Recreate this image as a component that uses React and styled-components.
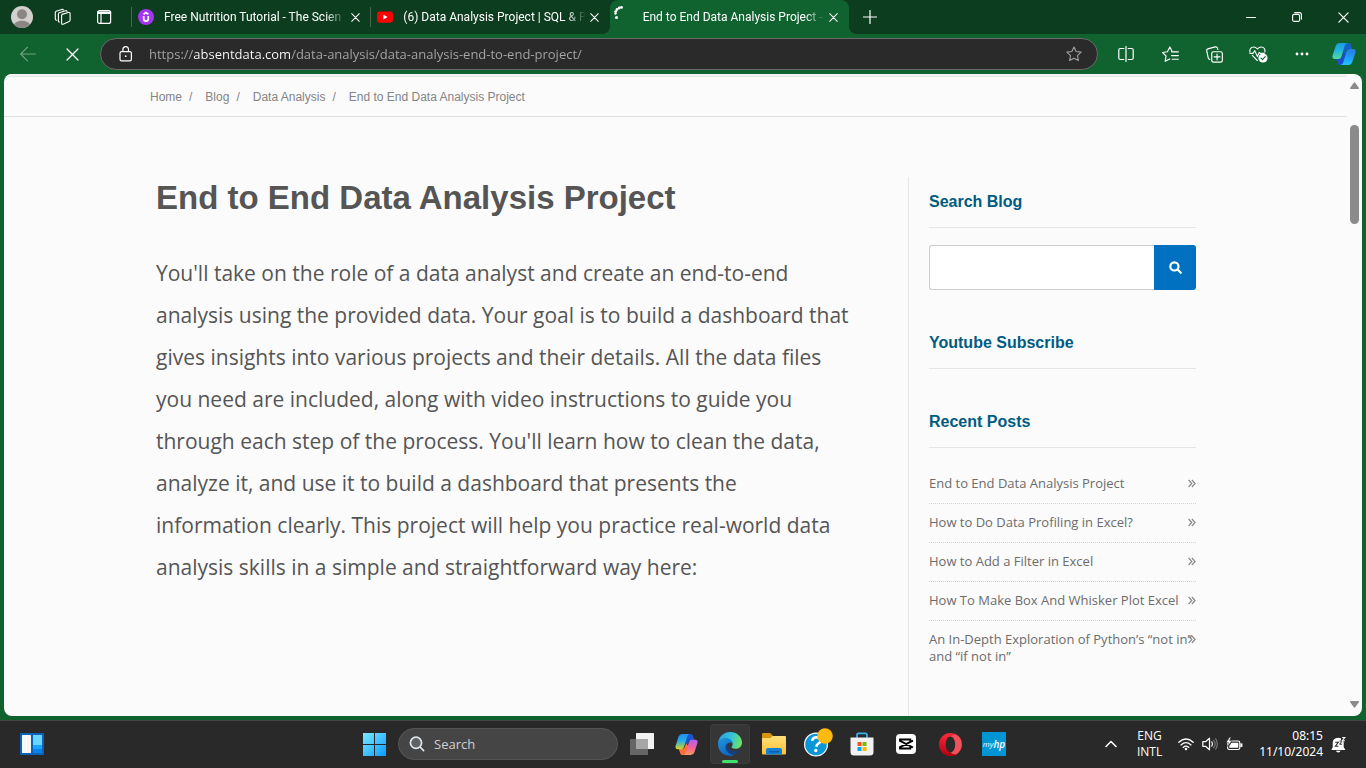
import React from 'react';
import styled, { createGlobalStyle, css } from 'styled-components';

const GlobalStyle = createGlobalStyle`
  *, *::before, *::after { box-sizing: border-box; }
  html, body, #root { height: 100%; }
  body { margin: 0; background: #10622f; }
  h1, h2, p, ol, ul { margin: 0; padding: 0; }
  ol, ul { list-style: none; }
  svg { display: block; flex: none; }
  button, input { font: inherit; }
  button { padding: 0; border: 0; background: none; color: inherit; }
  a { color: inherit; text-decoration: none; }
`;

const uiFont = `"Open Sans", "Noto Sans", sans-serif`;
const headingFont = `"Liberation Sans", Arial, sans-serif`;

const Screen = styled.div`
  display: flex;
  flex-direction: column;
  height: 100vh;
  overflow: hidden;
  font-family: ${uiFont};
`;

/* ---------- title bar ---------- */

const TitleBar = styled.header`
  display: flex;
  flex: none;
  height: 34px;
  background: #0c3d1f;
  color: #fff;
`;

const ProfileArea = styled.div`
  display: flex;
  align-items: center;
  flex: none;
  gap: 19px;
  width: 131px;
  padding-left: 11px;
`;

const BarButton = styled.button`
  display: flex;
  align-items: center;
  justify-content: center;
  flex: none;
  width: ${(p) => p.$width || 22}px;
  height: ${(p) => p.$height || 22}px;
  color: ${(p) => p.$color || '#fff'};
`;

const TabStrip = styled.div`
  display: flex;
  flex: 0 1 718px;
  min-width: 0;
`;

const TabItem = styled.div`
  position: relative;
  display: flex;
  align-items: center;
  flex: 1 1 239px;
  min-width: 0;
  padding: 0 6px 0 7px;
  ${(p) =>
    p.$active
      ? css`
          padding-left: 4px;
          background: #10622f;
          border-radius: 8px 8px 0 0;
          &::before,
          &::after {
            content: '';
            position: absolute;
            bottom: 0;
            width: 8px;
            height: 8px;
          }
          &::before {
            left: -8px;
            background: radial-gradient(circle at 0 0, transparent 8px, #10622f 8px);
          }
          &::after {
            right: -8px;
            background: radial-gradient(circle at 100% 0, transparent 8px, #10622f 8px);
          }
        `
      : css`
          &::after {
            content: '';
            position: absolute;
            left: 0;
            top: 7px;
            width: 1px;
            height: 20px;
            background: #47694f;
          }
        `}
`;

const TabTitle = styled.a`
  flex: 1;
  min-width: 0;
  margin-left: ${(p) => (p.$active ? 20 : 10)}px;
  overflow: hidden;
  white-space: nowrap;
  font-size: 12px;
  line-height: 20px;
  font-family: Roboto, ${uiFont};
  mask-image: linear-gradient(to right, #000 calc(100% - 20px), transparent 100%);
`;

const WindowButtons = styled.div`
  display: flex;
  margin-left: auto;
`;

/* ---------- navigation bar ---------- */

const NavBar = styled.nav`
  display: flex;
  align-items: center;
  flex: none;
  height: 40px;
  padding: 0 2px 0 6px;
  background: #10622f;
  color: #fff;
`;

const AddressBar = styled.label`
  display: flex;
  align-items: center;
  flex: 1;
  min-width: 0;
  height: 32px;
  margin: 0 6px;
  padding: 0 14px 0 16px;
  gap: 16px;
  border: 1px solid #6a6a6a;
  border-radius: 16px;
  background: #2a2a2a;
`;

const UrlInput = styled.input`
  flex: 1;
  min-width: 0;
  height: 28px;
  padding: 0;
  border: 0;
  outline: 0;
  font-size: 13px;
  color: transparent;
  background: linear-gradient(to right, #a8a8a8 44px, #fff 44px, #fff 142px, #a8a8a8 142px);
  background-clip: text;
`;

/* ---------- web page ---------- */

const Viewport = styled.div`
  display: flex;
  flex: 1;
  min-height: 0;
  margin: 0 4px 4px;
  border-radius: 8px;
  background: #fbfbfb;
  overflow: hidden;
`;

const Page = styled.div`
  display: flex;
  flex-direction: column;
  flex: 1;
  min-width: 0;
  border-top: 2px solid #f3f3f3;
  overflow: hidden;
`;

const CrumbBar = styled.nav`
  flex: none;
  border-top: 1px solid #e6e6e6;
  border-bottom: 1px solid #e0e0e0;
`;

const Container = styled.div`
  width: 100%;
  max-width: 1051px;
  margin: 0 auto;
`;

const Crumbs = styled.ol`
  display: flex;
  padding-top: 2px;
  font: 12px/37px ${headingFont};
  color: #848484;
`;

const Crumb = styled.li`
  & + &::before {
    content: '/';
    padding: 0 13px 0 7px;
  }
`;

const Columns = styled(Container)`
  display: flex;
  flex: 1;
  padding: 60px 5px 0 6px;
`;

const Article = styled.main`
  flex: 1;
  min-width: 0;
  padding-right: 52px;
`;

const ArticleTitle = styled.h1`
  font: bold 33px/42px ${headingFont};
  color: #555;
`;

const ArticleText = styled.p`
  margin-top: 33px;
  font-size: 21px;
  line-height: 42px;
  color: #555;
`;

const Sidebar = styled.aside`
  flex: none;
  width: 288px;
  padding: 14px 0 0 20px;
  border-left: 1px solid #e6e6e6;
`;

const Widget = styled.section`
  margin-bottom: 42px;
`;

const WidgetTitle = styled.h2`
  padding-bottom: 14px;
  border-bottom: 1px solid #e6e6e6;
  font: bold 16px/22px ${headingFont};
  color: #005c81;
`;

const SearchForm = styled.form`
  display: flex;
  height: 45px;
  margin-top: 17px;
`;

const SearchInput = styled.input`
  flex: 1;
  min-width: 0;
  padding: 0 12px;
  border: 1px solid #ccc;
  border-right: 0;
  border-radius: 3px 0 0 3px;
  background: #fff;
  outline: 0;
`;

const SearchButton = styled.button`
  display: flex;
  align-items: center;
  justify-content: center;
  width: 42px;
  border-radius: 0 3px 3px 0;
  background: #0070c0;
  color: #fff;
`;

const PostList = styled.ul`
  margin-top: 17px;
`;

const PostItem = styled.li`
  position: relative;
  padding: 10px 0 11px;
  font-size: 13px;
  line-height: 17px;
  color: #6c6c6c;
  & + & {
    border-top: 1px dotted #d4d4d4;
  }
`;

const PostArrow = styled.span`
  position: absolute;
  top: 14px;
  right: 0;
  color: #8a8a8a;
`;

const Scrollbar = styled.div`
  display: flex;
  flex-direction: column;
  align-items: center;
  flex: none;
  width: 15px;
  padding: 8px 0;
  color: #8b8b8b;
`;

const ScrollTrack = styled.div`
  flex: 1;
  padding-top: 36px;
`;

const ScrollThumb = styled.div`
  width: 9px;
  height: 99px;
  border-radius: 5px;
  background: #8b8b8b;
`;

/* ---------- taskbar ---------- */

const Taskbar = styled.footer`
  display: grid;
  grid-template-columns: 1fr auto 1fr;
  align-items: center;
  flex: none;
  height: 48px;
  box-shadow: inset 0 1px #444;
  background: #292929;
  color: #fff;
`;

const TaskLeft = styled.div`
  display: flex;
  padding-left: 12px;
`;

const TaskCenter = styled.div`
  display: flex;
  align-items: center;
  gap: 2px;
  padding-left: 2px;
`;

const TaskApps = styled.div`
  display: flex;
  gap: 4px;
  padding: 0 2px;
`;

const TaskButton = styled.button`
  position: relative;
  display: flex;
  align-items: center;
  justify-content: center;
  width: 40px;
  height: 40px;
  border-radius: 4px;
  ${(p) =>
    p.$active &&
    css`
      background: #363636;
      box-shadow: inset 0 0 0 1px #3d3d3d;
      &::after {
        content: '';
        position: absolute;
        left: 12px;
        bottom: 1px;
        width: 16px;
        height: 3px;
        border-radius: 2px;
        background: #3fdf6c;
      }
    `}
`;

const TaskSearch = styled.label`
  display: flex;
  align-items: center;
  gap: 9px;
  width: 220px;
  height: 32px;
  padding: 0 10px;
  border: 1px solid #555;
  border-radius: 16px;
  background: #454545;
`;

const TaskSearchInput = styled.input`
  flex: 1;
  min-width: 0;
  padding: 0;
  border: 0;
  outline: 0;
  background: none;
  font-size: 13px;
  color: #fff;
  &::placeholder {
    color: #d0d0d0;
    opacity: 1;
  }
`;

const Tray = styled.div`
  display: flex;
  align-items: center;
  justify-content: flex-end;
  padding-right: 11px;
`;

const TrayText = styled.button`
  display: block;
  font-size: 12px;
  line-height: 16px;
  font-family: ${(p) => (p.$align ? `"Noto Sans", ${uiFont}` : uiFont)};
  text-align: ${(p) => p.$align || 'center'};
`;

const TrayIcons = styled.button`
  display: flex;
  align-items: center;
  gap: 8px;
  margin: 0 16px;
`;

/* ---------- icons ---------- */

const Line = ({ size = 16, width = 1, box = 16, children }) => (
  <svg
    width={size}
    height={size}
    viewBox={`0 0 ${box} ${box}`}
    fill="none"
    stroke="currentColor"
    strokeWidth={width}
    strokeLinecap="round"
    strokeLinejoin="round"
    aria-hidden="true"
  >
    {children}
  </svg>
);

const CloseIcon = ({ size = 9, width = 1.2 }) => (
  <Line size={size} box={10} width={width}>
    <path d="M.8.8l8.4 8.4M9.2.8L.8 9.2" />
  </Line>
);

const AvatarIcon = () => (
  <svg width="22" height="22" viewBox="0 0 22 22" aria-hidden="true">
    <clipPath id="avatar"><circle cx="11" cy="11" r="11" /></clipPath>
    <g clipPath="url(#avatar)">
      <rect width="22" height="22" fill="#d2d0ce" />
      <circle cx="11" cy="8.3" r="5" fill="#8a8683" />
      <path d="M2.500 21c0-4 3.600-6.200 8.500-6.200s8.500 2.200 8.500 6.200v2h-17z" fill="#8a8683" />
    </g>
  </svg>
);

const WorkspacesIcon = () => (
  <Line size={18} box={18} width={1.1}>
    <path d="M8 6.400l6.300-1.900q1.800-.4 1.800 1.200v6.300q0 1.200-1 1.500l-6 2.700q-1.500.5-1.500-1V7.600q0-1 .4-1.200z" />
    <path d="M5.600 14q-1.200.1-1.200-1V6q0-1 .9-1.300l6.200-2q1.300-.3 1.500.7" />
    <path d="M2.800 12.200q-1.500 0-1.500-1.200V4.500q0-1 .9-1.300L7.900 1.400q1.200-.3 1.500.6" />
  </Line>
);

const TabMenuIcon = () => (
  <Line width={1.2}>
    <rect x="1.600" y="1.600" width="13" height="12.800" rx="2" />
    <path d="M1.600 3.200h13M1.600 4.400h13M5 4.600v9.600" />
  </Line>
);

const UdemyIcon = () => (
  <svg width="16" height="16" viewBox="0 0 16 16" aria-hidden="true">
    <circle cx="8" cy="8" r="8" fill="#a435f0" />
    <path d="M5.700 7v3.100q0 2 2.300 2t2.300-2V7M5.600 5.200L8 3.600l2.400 1.600" fill="none" stroke="#fff" strokeWidth="1.700" />
  </svg>
);

const YoutubeIcon = () => (
  <svg width="16" height="16" viewBox="0 0 16 16" aria-hidden="true">
    <rect y="2.400" width="16" height="11.400" rx="3" fill="#f00" />
    <path d="M6.400 5.700v4.800l4.200-2.400z" fill="#fff" />
  </svg>
);

const SpinnerIcon = () => (
  <svg width="9" height="34" viewBox="0 0 9 34" fill="#fff" aria-hidden="true">
    <circle cx="7.500" cy="7.400" r="1.400" />
    <circle cx="5.200" cy="8" r="1.400" />
    <circle cx="3" cy="9.500" r="1.400" />
    <circle cx="1.700" cy="11.600" r="1.400" />
    <circle cx="1.500" cy="13.500" r="1.200" />
    <circle cx="2.500" cy="17.500" r="1.500" />
  </svg>
);

const RestoreIcon = () => (
  <Line size={10} box={10} width={1.1}>
    <rect x=".6" y="2.400" width="7" height="7" rx="1.500" />
    <path d="M2.700.6h4.700q2 0 2 2v4.700" />
  </Line>
);

const BackIcon = () => (
  <Line width={1.1}>
    <path d="M15.400 8H.8M7.500 1.200L.7 8l6.800 6.800" />
  </Line>
);

const LockIcon = () => (
  <Line width={1.2}>
    <rect x="3" y="5.600" width="11.400" height="9.300" rx="1.600" />
    <path d="M5.900 5.500V3.600a2.800 2.900 0 0 1 5.600 0v1.900" />
    <circle cx="8.700" cy="10.200" r=".9" fill="currentColor" stroke="none" />
  </Line>
);

const StarIcon = () => (
  <Line width={1.1}>
    <path d="M8 .9l2.150 4.600 5 .65-3.700 3.450.95 5L8 12.150 3.600 14.600l.95-5L.85 6.150l5-.65z" />
  </Line>
);

const SplitIcon = () => (
  <Line width={1.2}>
    <path d="M5.800 2.500H2.300q-1.500 0-1.500 1.500v8q0 1.500 1.500 1.500h3.500M10.200 2.500h3.500q1.500 0 1.500 1.500v8q0 1.500-1.500 1.500h-3.500M8 .5v15" />
  </Line>
);

const FavoritesIcon = () => (
  <Line width={1.1} size={17}>
    <path d="M9.400 4.900L7.400.9l-2.300 4.500-4.600.7 3.300 3.300-.8 5 4.300-2.200" />
    <path d="M9 5.500h6.400M9 9h6.400M9.600 12.500h5.800" />
  </Line>
);

const CollectionsIcon = () => (
  <Line width={1.1} size={17}>
    <rect x="5.400" y="5.400" width="10" height="9.800" rx="1.800" />
    <path d="M10.400 7.600v5.400M7.700 10.300h5.400" />
    <path d="M3.600 12.600q-1.200-.1-1.500-1.400L.7 4.600q-.3-1.500 1.100-1.900L8.700.8q1.500-.3 2 1l.4 1.500" />
  </Line>
);

const HealthIcon = () => (
  <svg width="19" height="17" viewBox="0 0 19 17" fill="none" stroke="currentColor" strokeWidth="1.100" strokeLinecap="round" strokeLinejoin="round" aria-hidden="true">
    <path d="M1 6.300C.3 3.300 2 1 4.600 1q2.200 0 3.800 2Q10 1 12.200 1c2.800 0 4.300 2.400 3.600 5M3.300 9.400l5 5.100" />
    <path d="M1 7.400h3l1.800-2.800 2.500 5.800 1.900-4 1 1h4" />
    <circle cx="14" cy="12" r="4.600" fill="#fff" stroke="none" />
    <path d="M12 12.100l1.500 1.500 2.700-2.900" stroke="#10622f" />
  </svg>
);

const MoreIcon = () => (
  <svg width="14" height="4" viewBox="0 0 14 4" fill="currentColor" aria-hidden="true">
    <circle cx="2" cy="2" r="1.400" /><circle cx="7" cy="2" r="1.400" /><circle cx="12" cy="2" r="1.400" />
  </svg>
);

const CopilotIcon = ({ size, id, colors }) => (
  <svg width={size} height={size} viewBox="0 0 24 24" aria-hidden="true">
    <defs>
      <linearGradient id={`${id}a`} x1="0" y1="0" x2="0" y2="1">
        <stop offset="0" stopColor={colors[0]} />
        <stop offset=".45" stopColor={colors[1]} />
        <stop offset="1" stopColor={colors[2]} />
      </linearGradient>
      <linearGradient id={`${id}b`} x1=".5" y1="0" x2=".4" y2="1">
        <stop offset="0" stopColor={colors[3]} />
        <stop offset=".5" stopColor={colors[4]} />
        <stop offset="1" stopColor={colors[5]} />
      </linearGradient>
    </defs>
    <path d="M11.500 1h4.800q2 0 2.600 2l1.200 4.300h-3.600q-1.800 0-2.500 2l-1.500 4L9.500 8z" fill={colors[6]} />
    <path d="M12.500 23H8q-2 0-2.600-2l-1.400-4.300h3.500q2 0 2.700-2l1.300-4 3.500 4.500z" fill={colors[7]} />
    <path d="M7.500 1h7.800q-2 .6-2.700 3L9.500 14.500q-.8 2.500-3.200 2.500H2.800Q-.3 17 .6 13.500L3.700 4Q4.700 1 7.500 1z" fill={`url(#${id}a)`} />
    <path d="M16.500 23H8.700q2-.6 2.700-3l3.100-10.500Q15.300 7 17.700 7h3.500q3.100 0 2.200 3.500L20.300 20q-1 3-3.800 3z" fill={`url(#${id}b)`} />
  </svg>
);

const MagnifierIcon = () => (
  <Line size={13} box={12} width={2}>
    <circle cx="5" cy="5" r="3.800" />
    <path d="M8.100 8.100l2.800 2.800" />
  </Line>
);

const DoubleAngle = () => (
  <svg width="8" height="9" viewBox="0 0 8 9" fill="none" stroke="currentColor" strokeWidth="1.200" aria-hidden="true">
    <path d="M.6 1l3.200 3.500L.6 8M3.900 1l3.200 3.500L3.900 8" />
  </svg>
);

const ScrollArrow = ({ down }) => (
  <svg width="9" height="7" viewBox="0 0 9 7" fill="currentColor" aria-hidden="true">
    <path d={down ? 'M.6 0h7.800q.9.300.4 1.200L5.200 6.300q-.7.800-1.400 0L.2 1.200Q-.3.300.6 0z' : 'M.6 7h7.800q.9-.3.400-1.200L5.200.7q-.7-.8-1.400 0L.2 5.800Q-.3 6.700.6 7z'} />
  </svg>
);

const WidgetsIcon = () => (
  <svg width="24" height="22" viewBox="0 0 24 22" aria-hidden="true">
    <rect width="24" height="22" rx="1" fill="#0c62b8" />
    <rect x="2" y="2" width="9" height="18" rx=".6" fill="#f7f7f7" />
    <rect x="13" y="2" width="9" height="10" fill="#68d6ff" />
    <rect x="13" y="12" width="9" height="4" fill="#1ba4fb" />
    <rect x="13" y="16" width="9" height="4" fill="#0883e8" />
  </svg>
);

const StartIcon = () => (
  <svg width="23" height="23" viewBox="0 0 23 23" aria-hidden="true">
    <linearGradient id="start" gradientUnits="userSpaceOnUse" x1="0" y1="0" x2="23" y2="23">
      <stop offset="0" stopColor="#7beaff" /><stop offset="1" stopColor="#0a9bff" />
    </linearGradient>
    <path d="M0 0h11v11H0zM12 0h11v11H12zM0 12h11v11H0zM12 12h11v11H12z" fill="url(#start)" />
  </svg>
);

const TaskSearchIcon = () => (
  <svg width="16" height="16" viewBox="0 0 16 16" fill="#5e6264" stroke="#dfe6ea" strokeWidth="1.700" strokeLinecap="round" aria-hidden="true">
    <circle cx="7" cy="6.800" r="5.600" /><path d="M11.100 11l3.500 3.600" />
  </svg>
);

const TaskViewIcon = () => (
  <svg width="24" height="22" viewBox="0 0 24 22" aria-hidden="true">
    <rect x="6" width="18" height="16" rx=".6" fill="#f2f2f2" />
    <rect y="6" width="18" height="16" rx=".6" fill="#666" />
    <rect x="6" y="6" width="12" height="10" fill="#a6a6a6" />
  </svg>
);

const EdgeIcon = () => (
  <svg width="24" height="24" viewBox="0 0 24 24" aria-hidden="true">
    <defs>
      <linearGradient id="edgeTop" x1="0" y1=".4" x2="1" y2=".6">
        <stop offset="0" stopColor="#2a9fe0" /><stop offset=".5" stopColor="#33c4dc" /><stop offset="1" stopColor="#72e35c" />
      </linearGradient>
      <linearGradient id="edgeSide" x1="0" y1="0" x2=".5" y2="1">
        <stop offset="0" stopColor="#1e97de" /><stop offset="1" stopColor="#1166c0" />
      </linearGradient>
    </defs>
    <path d="M.1 11C.8 4.400 6 0 12 0c7 0 12 5 12 10.500 0 4-3 6.300-6.400 6.300-3.300 0-4.400-1.300-4.100-2 .9-1 1.400-2 .9-3.900C13.600 7.800 10 6.300 6.600 7 3.500 7.600 1 9.300.1 11z" fill="url(#edgeTop)" />
    <path d="M.1 11C1 7.800 4.200 6 7.600 6c4 0 6.600 2.400 6.900 5.200-1.700-1.600-5.700-1-6 3.300-.2 4.200 3.300 8 7.500 8.400C8.600 26-.8 20.600.1 11z" fill="url(#edgeSide)" />
    <path d="M9.900 11c-2.800 1.400-3 5.300-.8 8.300 2.800 3.700 8.300 4.700 12.600-.2.400-.5.100-.8-.5-.5-5.500 2.500-11.600-.7-12-4.600-.1-1.200.1-2.200.7-3z" fill="#123f88" />
  </svg>
);

const FolderIcon = () => (
  <svg width="24" height="22" viewBox="0 0 24 22" aria-hidden="true">
    <path d="M0 1.200Q0 0 1.200 0h6.300q.8 0 1.400.6L11 3v5H0z" fill="#d8950b" />
    <linearGradient id="folder" x1="0" y1="0" x2="0" y2="1"><stop offset="0" stopColor="#ffe07c" /><stop offset="1" stopColor="#fdc130" /></linearGradient>
    <path d="M0 6q0-1 1-1h7.500l2.200-2H23q1 0 1 1v16.500q0 1-1 1H1q-1 0-1-1z" fill="url(#folder)" />
    <path d="M4 21.500V17q0-2 2-2h12q2 0 2 2v4.500z" fill="#1481d8" /><path d="M7 18h10v1.500H7z" fill="#0d5ba5" />
  </svg>
);

const HelpIcon = () => (
  <svg width="30" height="32" viewBox="0 0 30 32" aria-hidden="true">
    <circle cx="13" cy="16.500" r="12" fill="#fff" />
    <circle cx="13" cy="16.500" r="10.800" fill="#0b96d6" />
    <path d="M9.200 13q.3-3.800 4.500-3.800 4 .2 3.800 3.600-.1 1.700-2.200 2.900-1.700 1-2 3" fill="none" stroke="#fff" strokeWidth="2.600" />
    <circle cx="12.800" cy="22.500" r="1.700" fill="#fff" />
    <circle cx="22" cy="8" r="7.800" fill="#ffb90f" />
  </svg>
);

const StoreIcon = () => (
  <svg width="24" height="24" viewBox="0 0 24 24" aria-hidden="true">
    <path d="M7 6V3q0-1.700 1.700-1.700h6.600Q17 1.300 17 3v3" fill="none" stroke="#37b4ee" strokeWidth="1.700" />
    <path d="M.5 5.500h23V20q0 3.500-3.500 3.500H4Q.5 23.500.5 20z" fill="#f1f1f1" />
    <path d="M7.500 10h4v4h-4z" fill="#f25022" /><path d="M12.500 10h4v4h-4z" fill="#7fba00" />
    <path d="M7.500 15h4v4h-4z" fill="#00a4ef" /><path d="M12.500 15h4v4h-4z" fill="#ffb900" />
  </svg>
);

const CapcutIcon = () => (
  <svg width="20" height="20" viewBox="0 0 20 20" aria-hidden="true">
    <rect width="20" height="20" rx="4" fill="#fff" />
    <path d="M17 6.700L4 13.200v1.300h10.300v-1.700M17 13.500L4 6.800V5.500h10.300v1.700" fill="none" stroke="#000" strokeWidth="1.900" />
  </svg>
);

const OperaIcon = () => (
  <svg width="23" height="23" viewBox="0 0 23 23" aria-hidden="true">
    <linearGradient id="opera" x1="0" y1="0" x2="0" y2="1"><stop offset="0" stopColor="#ff2a3c" /><stop offset="1" stopColor="#b0000f" /></linearGradient>
    <path fillRule="evenodd" d="M11.500 0a11.500 11.500 0 1 0 0 23 11.500 11.500 0 0 0 0-23zm0 3.600c2.700 0 4.700 3.500 4.700 7.900s-2 7.900-4.700 7.900-4.700-3.500-4.700-7.900 2-7.900 4.700-7.900z" fill="url(#opera)" />
    <path d="M11.500 3.600q2.300-2.200 5.400-2.100a11.500 11.500 0 0 1 0 20q-3.100.1-5.400-2.100c2.700 0 4.700-3.500 4.700-7.900s-2-7.900-4.700-7.900z" fill="#f0525a" />
  </svg>
);

const HpTile = styled.span`
  display: flex;
  align-items: center;
  justify-content: center;
  width: 24px;
  height: 24px;
  background: #0096d6;
  color: #fff;
  font: italic 8px/24px ${uiFont};
  b { font-size: 10px; font-weight: 600; }
`;

const ChevronUpIcon = () => (
  <Line size={12} box={12} width={1.5}><path d="M1 8.500l5-5 5 5" /></Line>
);

const WifiIcon = () => (
  <Line width={1.3}>
    <path d="M.8 6.300q7.200-6.500 14.400 0M3 8.900q5-4.500 10 0M5.200 11.400q2.800-2.400 5.600 0" />
    <circle cx="8" cy="13" r="1.300" fill="currentColor" stroke="none" />
  </Line>
);

const SpeakerIcon = () => (
  <Line width={1.2}>
    <path d="M.8 5.700h2.700l4-3.500v11.600l-4-3.500H.8zM9.800 5.800q1.400 2.200 0 4.400" />
    <path d="M11.800 4.300q2.600 3.700 0 7.400M13.700 2.700q3.200 5.300 0 10.600" stroke="#777" />
  </Line>
);

const BatteryIcon = () => (
  <svg width="17" height="14" viewBox="0 0 17 14" fill="none" stroke="currentColor" strokeWidth="1.200" aria-hidden="true">
    <rect x="1.600" y="4" width="12.200" height="8.500" rx="1.800" />
    <path d="M5.500 5.700h6.800v5.100H3.300V9z" fill="currentColor" stroke="none" />
    <path d="M14.400 6.400h2v3.600h-2z" fill="currentColor" stroke="none" />
    <path d="M3.700 0L0 5.600h2.300L1.500 9.500l4.600-5.800H3.600L5 0z" fill="currentColor" stroke="#292929" strokeWidth=".6" />
  </svg>
);

const BellIcon = () => (
  <svg width="16" height="17" viewBox="0 0 16 17" aria-hidden="true">
    <path d="M1.700 11.500V7q0-5 5.500-5.200 5.500.2 5.500 5.200v4.500l1.500 1.800v.7H.5v-.7zM5 14.700h4.500q-.4 1.700-2.250 1.700T5 14.700z" fill="#fff" />
    <path d="M4.300 6.200h3L4.400 10.200h3" fill="none" stroke="#292929" strokeWidth="1.100" />
    <path d="M10 .5h5v4.600h-5z" fill="#292929" />
    <path d="M8.600 5h2.400L8.700 8.200h2.400" fill="none" stroke="#292929" strokeWidth="1" />
    <path d="M11.200 1.500h2.600l-2.600 3.200h2.700" fill="none" stroke="#fff" strokeWidth="1.100" />
  </svg>
);

/* ---------- data ---------- */

const tabs = [
  { title: 'Free Nutrition Tutorial - The Scien', icon: <UdemyIcon /> },
  { title: '(6) Data Analysis Project | SQL & P', icon: <YoutubeIcon /> },
  { title: 'End to End Data Analysis Project -', icon: <SpinnerIcon />, active: true },
];

const crumbs = ['Home', 'Blog', 'Data Analysis', 'End to End Data Analysis Project'];

const posts = [
  'End to End Data Analysis Project',
  'How to Do Data Profiling in Excel?',
  'How to Add a Filter in Excel',
  'How To Make Box And Whisker Plot Excel',
  'An In-Depth Exploration of Python’s “not in” and “if not in”',
];

const edgeCopilot = ['#1b9de0', '#22b3e0', '#55dca0', '#2b7be6', '#1f9bf5', '#22c3ff', '#1660c4', '#1c4fd0'];
const taskCopilot = ['#2190f2', '#24aee8', '#d8d520', '#b063f0', '#f0609c', '#ff9a60', '#1a55d0', '#ff7038'];

const apps = [
  { name: 'Task view', icon: <TaskViewIcon /> },
  { name: 'Copilot', icon: <CopilotIcon size={23} id="taskCopilot" colors={taskCopilot} /> },
  { name: 'Microsoft Edge', icon: <EdgeIcon />, active: true },
  { name: 'File Explorer', icon: <FolderIcon /> },
  { name: 'Get Help', icon: <HelpIcon /> },
  { name: 'Microsoft Store', icon: <StoreIcon /> },
  { name: 'CapCut', icon: <CapcutIcon /> },
  { name: 'Opera', icon: <OperaIcon /> },
  { name: 'myHP', icon: <HpTile>my<b>hp</b></HpTile> },
];

export default function App() {
  return (
    <Screen>
      <GlobalStyle />
      <TitleBar>
        <ProfileArea>
          <BarButton aria-label="Profile"><AvatarIcon /></BarButton>
          <BarButton aria-label="Workspaces"><WorkspacesIcon /></BarButton>
          <BarButton aria-label="Tab actions"><TabMenuIcon /></BarButton>
        </ProfileArea>
        <TabStrip>
          {tabs.map((tab) => (
            <TabItem key={tab.title} $active={tab.active}>
              {tab.icon}
              <TabTitle href="#" $active={tab.active}>{tab.title}</TabTitle>
              <BarButton aria-label="Close tab" $width={18}><CloseIcon /></BarButton>
            </TabItem>
          ))}
        </TabStrip>
        <BarButton aria-label="New tab" $width={42} $height={34}>
          <Line size={14} box={14} width={1.2}><path d="M7 .5v13M.5 7h13" /></Line>
        </BarButton>
        <WindowButtons>
          <BarButton aria-label="Minimize" $width={46} $height={34}>
            <Line size={10} box={10} width={1}><path d="M.5 5.500h9" /></Line>
          </BarButton>
          <BarButton aria-label="Restore" $width={46} $height={34}><RestoreIcon /></BarButton>
          <BarButton aria-label="Close" $width={46} $height={34}><CloseIcon size={11} width={1.1} /></BarButton>
        </WindowButtons>
      </TitleBar>

      <NavBar>
        <BarButton aria-label="Back" $width={44} $height={40} $color="#6fa283"><BackIcon /></BarButton>
        <BarButton aria-label="Stop" $width={44} $height={40}><CloseIcon size={13} width={1} /></BarButton>
        <AddressBar>
          <LockIcon />
          <UrlInput
            aria-label="Address"
            spellCheck={false}
            defaultValue="https://absentdata.com/data-analysis/data-analysis-end-to-end-project/"
          />
          <BarButton aria-label="Add to favorites" $width={18} $color="#a0a0a0"><StarIcon /></BarButton>
        </AddressBar>
        <BarButton aria-label="Split screen" $width={44} $height={40}><SplitIcon /></BarButton>
        <BarButton aria-label="Favorites" $width={44} $height={40}><FavoritesIcon /></BarButton>
        <BarButton aria-label="Collections" $width={44} $height={40}><CollectionsIcon /></BarButton>
        <BarButton aria-label="Browser essentials" $width={44} $height={40}><HealthIcon /></BarButton>
        <BarButton aria-label="Settings and more" $width={44} $height={40}><MoreIcon /></BarButton>
        <BarButton aria-label="Copilot" $width={40} $height={40}>
          <CopilotIcon size={24} id="edgeCopilot" colors={edgeCopilot} />
        </BarButton>
      </NavBar>

      <Viewport>
        <Page>
          <CrumbBar aria-label="Breadcrumb">
            <Container>
              <Crumbs>
                {crumbs.map((crumb) => (
                  <Crumb key={crumb}><a href="#">{crumb}</a></Crumb>
                ))}
              </Crumbs>
            </Container>
          </CrumbBar>
          <Columns>
            <Article>
              <ArticleTitle>End to End Data Analysis Project</ArticleTitle>
              <ArticleText>
                You'll take on the role of a data analyst and create an end-to-end analysis using the provided
                data. Your goal is to build a dashboard that gives insights into various projects and their
                details. All the data files you need are included, along with video instructions to guide you
                through each step of the process. You'll learn how to clean the data, analyze it, and use it to
                build a dashboard that presents the information clearly. This project will help you practice
                real-world data analysis skills in a simple and straightforward way here:
              </ArticleText>
            </Article>
            <Sidebar>
              <Widget>
                <WidgetTitle>Search Blog</WidgetTitle>
                <SearchForm role="search" onSubmit={(e) => e.preventDefault()}>
                  <SearchInput type="text" aria-label="Search blog" />
                  <SearchButton type="submit" aria-label="Search"><MagnifierIcon /></SearchButton>
                </SearchForm>
              </Widget>
              <Widget>
                <WidgetTitle>Youtube Subscribe</WidgetTitle>
              </Widget>
              <Widget>
                <WidgetTitle>Recent Posts</WidgetTitle>
                <PostList>
                  {posts.map((post) => (
                    <PostItem key={post}>
                      <a href="#">{post}</a>
                      <PostArrow><DoubleAngle /></PostArrow>
                    </PostItem>
                  ))}
                </PostList>
              </Widget>
            </Sidebar>
          </Columns>
        </Page>
        <Scrollbar>
          <ScrollArrow />
          <ScrollTrack><ScrollThumb /></ScrollTrack>
          <ScrollArrow down />
        </Scrollbar>
      </Viewport>

      <Taskbar>
        <TaskLeft>
          <TaskButton aria-label="Widgets"><WidgetsIcon /></TaskButton>
        </TaskLeft>
        <TaskCenter>
          <BarButton aria-label="Start" $width={44} $height={40}><StartIcon /></BarButton>
          <TaskSearch>
            <TaskSearchIcon />
            <TaskSearchInput type="text" placeholder="Search" aria-label="Search" />
          </TaskSearch>
          <TaskApps>
            {apps.map((app) => (
              <TaskButton key={app.name} aria-label={app.name} $active={app.active}>{app.icon}</TaskButton>
            ))}
          </TaskApps>
        </TaskCenter>
        <Tray>
          <BarButton aria-label="Show hidden icons" $width={52} $height={40}><ChevronUpIcon /></BarButton>
          <TrayText>ENG<br />INTL</TrayText>
          <TrayIcons aria-label="Network, volume and battery">
            <WifiIcon />
            <SpeakerIcon />
            <BatteryIcon />
          </TrayIcons>
          <TrayText $align="right">08:15<br />11/10/2024</TrayText>
          <BarButton aria-label="Notifications" $width={32} $height={40}><BellIcon /></BarButton>
        </Tray>
      </Taskbar>
    </Screen>
  );
}
